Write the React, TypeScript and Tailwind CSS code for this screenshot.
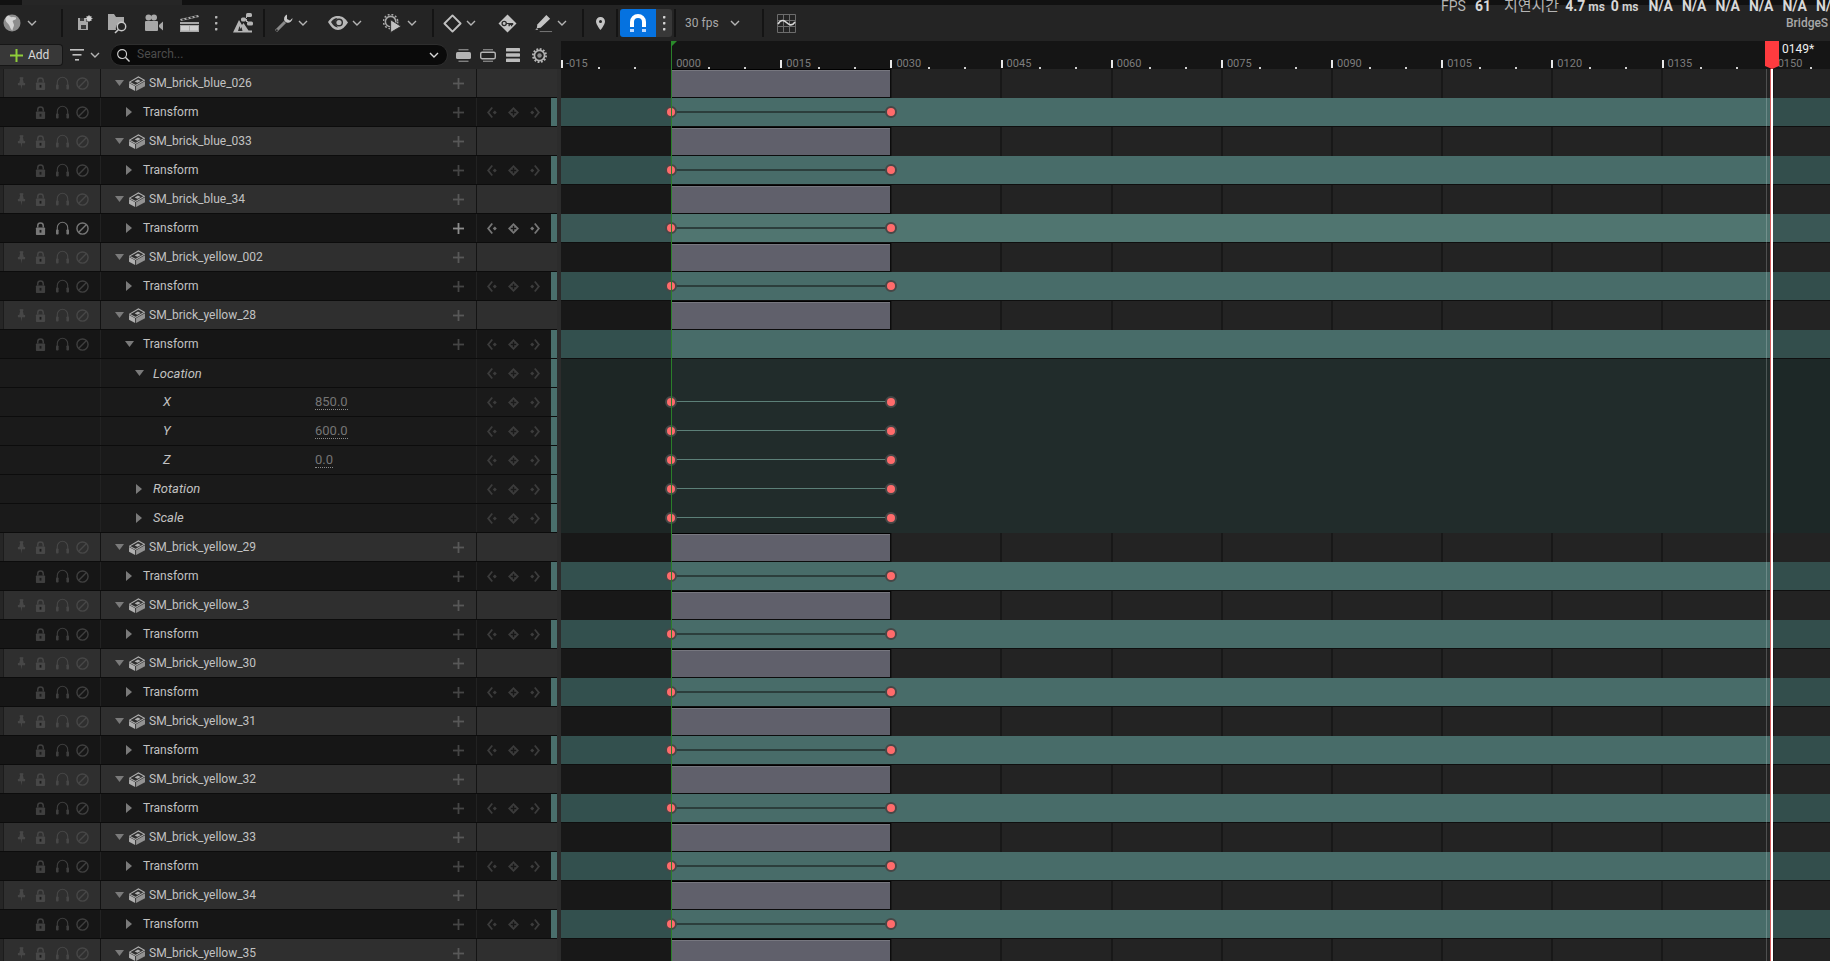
import React from "react";

const font = { fontFamily: '"Roboto", "Noto Sans CJK KR", sans-serif' };

function Chevron({ className = "" }: { className?: string }) {
  return (
    <svg viewBox="0 0 10 6" className={`w-[10px] h-[6px] shrink-0 ${className}`} fill="none" stroke="currentColor" strokeWidth="1.4">
      <path d="M1 1l4 4 4-4" />
    </svg>
  );
}
function Sep() {
  return <div className="w-[2px] h-[28px] bg-[#141414] shrink-0" />;
}
function Globe() {
  return (
    <svg viewBox="0 0 18 18" className="w-[18px] h-[18px]">
      <circle cx="9" cy="9" r="8.5" fill="#8d8d8d" />
      <path d="M5 1.5c2 1 3 2 5 1.5l3 .5c.5 2-1 2.5-3 3-1 1 1 3 1 4.500 0 2-1.500 3-1.500 5.500-2-1-2.500-4-3.500-5.500S3 8 2.500 6 3.500 2.500 5 1.500z" fill="#d2d2d2" />
    </svg>
  );
}
function SaveIc() {
  return (
    <svg viewBox="0 0 16 16" className="w-[16px] h-[16px]" fill="#a8a8a8">
      <path d="M1 3h8v3.500h2V15H1z" />
      <rect x="4" y="10" width="5" height="4" fill="#3b3b3b" />
      <rect x="3" y="3" width="4" height="3" fill="#3b3b3b" />
      <circle cx="12" cy="3.500" r="2.600" fill="#d0d0d0" />
      <path d="M12 0v7M8.500 3.500h7M9.500 1l5 5M14.500 1l-5 5" stroke="#d0d0d0" strokeWidth=".8" />
    </svg>
  );
}
function FolderSearch() {
  return (
    <svg viewBox="0 0 21 21" className="w-[21px] h-[21px]">
      <path d="M0 1h6l2 3h8v6a6 6 0 00-8 7H0z" fill="#a8a8a8" />
      <circle cx="13.500" cy="13.500" r="4.200" fill="none" stroke="#c8c8c8" strokeWidth="1.400" />
      <path d="M10.500 16.500L7 20" stroke="#c8c8c8" strokeWidth="1.600" />
    </svg>
  );
}
function Camera() {
  return (
    <svg viewBox="0 0 20 18" className="w-[20px] h-[18px]" fill="#a8a8a8">
      <circle cx="4.500" cy="3.500" r="3" />
      <circle cx="10" cy="3.500" r="3" />
      <rect x="1" y="7" width="13" height="10" rx="1" />
      <path d="M15 11l4-3.500v9L15 13z" />
    </svg>
  );
}
function Clapper() {
  return (
    <svg viewBox="0 0 20 19" className="w-[20px] h-[19px]" fill="#a8a8a8">
      <path d="M0 5l18-4 1 2-18 4z" />
      <path d="M2 5l1 1.500 2-.5-1-1.500zM6 4l1 1.500 2-.5L8 3zM10 3l1 1.500 2-.5-1-1.500zM14 2.200l1 1.500 2-.5-1-1.500z" fill="#2c2c2c" />
      <rect x="0" y="8" width="19" height="10" />
      <rect x="1" y="12" width="8" height="4.500" fill="#d0d0d0" />
      <rect x="10" y="12" width="8" height="4.500" fill="#d0d0d0" />
      <rect x="0" y="10" width="19" height="1" fill="#2c2c2c" />
    </svg>
  );
}
function Dots({ className = "" }: { className?: string }) {
  return (
    <svg viewBox="0 0 4 16" className={`w-[4px] h-[16px] ${className}`} fill="currentColor">
      <rect x="1" y="1" width="2.400" height="2.400" rx=".6" />
      <rect x="1" y="7" width="2.400" height="2.400" rx=".6" />
      <rect x="1" y="13" width="2.400" height="2.400" rx=".6" />
    </svg>
  );
}
function TreeIc() {
  return (
    <svg viewBox="0 0 20 20" className="w-[20px] h-[20px]" fill="#b4b4b4">
      <path d="M0 19.500L6 7l3 5 1.500-2 5 7.500H19v2z" />
      <path d="M5 18l1.500-5 1 3 1-2 1 4z" fill="#2c2c2c" />
      <rect x="13" y="0" width="6" height="4" rx="1.500" />
      <rect x="8" y="4.500" width="5" height="4" rx="1.500" />
      <rect x="14" y="8.500" width="6" height="4" rx="1.500" />
      <path d="M13 2h1v3h-1zM13 6v3h2v-1h-1V6z" />
    </svg>
  );
}
function Wrench() {
  return (
    <svg viewBox="0 0 20 20" className="w-[20px] h-[20px]" fill="none">
      <path d="M2 18l9-9" stroke="#8a8a8a" strokeWidth="3" />
      <circle cx="2.800" cy="17.200" r="1" fill="#2c2c2c" />
      <path d="M13 1.500a4.500 4.500 0 00-2 7l1.500 1a4.500 4.500 0 006-4.500l-2.500 2.500-3-1.500V3z" fill="#c8c8c8" />
    </svg>
  );
}
function Eye() {
  return (
    <svg viewBox="0 0 20 14" className="w-[20px] h-[14px]">
      <path d="M0 6c3-4.500 6-6 10-6s7 2 10 6.500C17 11 14 14 10 14S3 11 0 6z" fill="#b8b8b8" />
      <path d="M3 6c2-2.500 4-4 6.500-4C8 3.500 7.500 4.500 7.500 6.500S8.500 10 10 11.500C7 11.500 5 9 3 6z" fill="#2c2c2c" />
      <circle cx="11" cy="6.500" r="4" fill="#2c2c2c" />
      <circle cx="11" cy="6.500" r="2.600" fill="#b8b8b8" />
    </svg>
  );
}
function GearPlay() {
  return (
    <svg viewBox="0 0 20 20" className="w-[19px] h-[19px]" fill="none">
      <circle cx="8" cy="8" r="5.500" stroke="#a8a8a8" strokeWidth="1.600" />
      <circle cx="8" cy="8" r="7.500" stroke="#a8a8a8" strokeWidth="1.600" strokeDasharray="2 2" />
      <path d="M8 6l11 7-11 6.500z" fill="#c0c0c0" stroke="#2c2c2c" strokeWidth="1" />
    </svg>
  );
}
function DiamondOutline() {
  return (
    <svg viewBox="0 0 20 20" className="w-[19px] h-[19px]" fill="none" stroke="#c0c0c0" strokeWidth="2">
      <path d="M10 1.500l8.500 8.500-8.500 8.500L1.500 10z" strokeLinejoin="round" />
    </svg>
  );
}
function DiamondKey() {
  return (
    <svg viewBox="0 0 20 20" className="w-[19px] h-[19px]">
      <path d="M10 .5l9.500 9.500-9.500 9.500L.5 10z" fill="#c4c4c4" strokeLinejoin="round" />
      <circle cx="6.500" cy="10" r="2.200" fill="none" stroke="#2c2c2c" strokeWidth="1.400" />
      <path d="M8.500 9.500H16v2h-1v1.500h-1.500v-1.500h-1V13H11v-2.500H8.500z" fill="#2c2c2c" />
    </svg>
  );
}
function Pencil() {
  return (
    <svg viewBox="0 0 20 20" className="w-[19px] h-[19px]">
      <path d="M13 1l4 4L7 14.500l-4 .5.500-4z" fill="#c4c4c4" />
      <path d="M1 17l2-2 1.500 1.500H1z" fill="#c4c4c4" />
      <rect x="6" y="18" width="13" height="1" fill="#7a7a7a" />
    </svg>
  );
}
function MapPin() {
  return (
    <svg viewBox="0 0 9 13" className="w-[9px] h-[13px]">
      <path fillRule="evenodd" d="M4.500 0A4.400 4.400 0 000 4.400C0 7.500 4.500 13 4.500 13S9 7.500 9 4.400A4.400 4.400 0 004.500 0zm0 3a1.500 1.500 0 110 3 1.500 1.500 0 010-3z" fill="#c4c4c4" />
    </svg>
  );
}
function Magnet() {
  return (
    <svg viewBox="0 0 16 18" className="w-[16px] h-[18px]">
      <path d="M0 13V8a8 8 0 0116 0v5h-4V8a4 4 0 00-8 0v5z" fill="#fff" />
      <rect x="0" y="15" width="4" height="3" fill="#bcd9ff" />
      <rect x="12" y="15" width="4" height="3" fill="#bcd9ff" />
    </svg>
  );
}
function GraphIc() {
  return (
    <svg viewBox="0 0 19 19" className="w-[19px] h-[19px]" fill="none">
      <path d="M.5.5h18v18H.5zM6.500.5v18M12.500.5v18M.5 6.500h18M.5 12.500h18" stroke="#6c6c6c" strokeWidth="1" />
      <path d="M1 10c3-5 6-4 8.500-1.500S15 12.500 18 8" stroke="#d8d8d8" strokeWidth="1.600" />
    </svg>
  );
}
function Filter() {
  return (
    <svg viewBox="0 0 14 12" className="w-[14px] h-[12px]" fill="#c0c0c0">
      <rect x="0" y="0" width="14" height="1.600" />
      <rect x="2.500" y="5" width="9" height="1.600" />
      <rect x="5" y="10" width="4" height="1.600" />
    </svg>
  );
}
function Search() {
  return (
    <svg viewBox="0 0 14 14" className="w-[13px] h-[13px]" fill="none" stroke="#d0d0d0" strokeWidth="1.200">
      <circle cx="5.500" cy="5.500" r="4.800" />
      <path d="M9 9l4.500 4.500" strokeWidth="1.500" />
    </svg>
  );
}
function RowSizeA() {
  return (
    <svg viewBox="0 0 15 13" className="w-[15px] h-[13px]" fill="#b4b4b4">
      <rect x="2.500" y="0" width="10" height="1.400" fill="#808080" />
      <rect x="0" y="3" width="15" height="7" rx="1.500" />
      <rect x="2.500" y="11.600" width="10" height="1.400" fill="#808080" />
    </svg>
  );
}
function RowSizeB() {
  return (
    <svg viewBox="0 0 16 13" className="w-[16px] h-[13px]">
      <rect x="3" y="0" width="10" height="1.400" fill="#808080" />
      <rect x=".7" y="3.200" width="14.600" height="6.600" rx="1.500" fill="none" stroke="#b4b4b4" strokeWidth="1.400" />
      <rect x="3" y="11.600" width="10" height="1.400" fill="#808080" />
    </svg>
  );
}
function RowSizeC() {
  return (
    <svg viewBox="0 0 14 14" className="w-[14px] h-[14px]" fill="#bcbcbc">
      <rect x="0" y="0" width="14" height="3.500" rx=".6" />
      <rect x="0" y="5.200" width="14" height="3.500" rx=".6" />
      <rect x="0" y="10.500" width="14" height="3.500" rx=".6" />
    </svg>
  );
}
function Gear() {
  return (
    <svg viewBox="0 0 16 16" className="w-[15px] h-[15px]" fill="none">
      <circle cx="8" cy="8" r="5.400" stroke="#b4b4b4" strokeWidth="1.800" />
      <circle cx="8" cy="8" r="7" stroke="#b4b4b4" strokeWidth="2" strokeDasharray="2 1.670" />
      <circle cx="8" cy="8" r="2.400" fill="#8c8c8c" />
    </svg>
  );
}
function PinIc({ c }: { c: string }) {
  return (
    <svg viewBox="0 0 10 14" className="w-[9px] h-[13px]" fill={c}>
      <rect x="3" y="0" width="4" height="2" />
      <path d="M3.500 2h3l1 4.500H9V9H1V6.500h1.500zM4.300 9h1.400L5 14z" />
    </svg>
  );
}
function LockIc({ c }: { c: string }) {
  return (
    <svg viewBox="0 0 12 14" className="w-[11px] h-[13px]">
      <path d="M3 6V4a3 3 0 016 0v2" fill="none" stroke={c} strokeWidth="1.600" />
      <rect x="1" y="6" width="10" height="8" rx=".8" fill={c} />
      <rect x="5" y="8.500" width="2" height="3" fill="#1c1c1c" />
    </svg>
  );
}
function PhonesIc({ c }: { c: string }) {
  return (
    <svg viewBox="0 0 13 14" className="w-[13px] h-[14px]">
      <path d="M1.300 10V6.500a5.200 5.200 0 0110.400 0V10" fill="none" stroke={c} strokeWidth="1.100" />
      <rect x="0" y="8.500" width="2.600" height="5" rx=".8" fill={c} />
      <rect x="10.400" y="8.500" width="2.600" height="5" rx=".8" fill={c} />
    </svg>
  );
}
function NoIc({ c }: { c: string }) {
  return (
    <svg viewBox="0 0 14 14" className="w-[13px] h-[13px]" fill="none" stroke={c} strokeWidth="1.500">
      <circle cx="7" cy="7" r="6" />
      <path d="M3 11L11 3" />
    </svg>
  );
}
function Brick({ c = "#b0b0b0" }: { c?: string }) {
  return (
    <svg viewBox="0 0 17 16" className="w-[16px] h-[15px]">
      <path d="M.5 6.500L10 1l6.500 3.500L7 10z" fill="none" stroke={c} strokeWidth="1.100" />
      <path d="M6 5.800l3.500-2 3 1.500-3.500 2z" fill={c} />
      <path d="M0 7.500l6.500 3.300V16L0 12.500z" fill={c} />
      <path d="M7.500 10.800L17 5.700v5.300L7.500 16z" fill="#929292" />
    </svg>
  );
}
function Plus({ c }: { c: string }) {
  return (
    <svg viewBox="0 0 11 11" className="w-[11px] h-[11px]" fill={c}>
      <rect x="4.600" y="0" width="1.800" height="11" />
      <rect x="0" y="4.600" width="11" height="1.800" />
    </svg>
  );
}
function KeyNav({ c }: { c: string }) {
  return (
    <div className="flex items-center w-[53px] justify-between ml-[10px]">
      <svg viewBox="0 0 12 12" className="w-[11px] h-[11px]" fill={c}>
        <path d="M5 0L0 6l5 6 1.500-1.200L2.500 6l4-4.800z" />
        <path d="M8.500 3.800L10.700 6 8.500 8.200 6.300 6z" />
      </svg>
      <svg viewBox="0 0 12 12" className="w-[11px] h-[11px]" fill={c}>
        <path fillRule="evenodd" d="M6 0l6 6-6 6-6-6zM5.200 3v2.200H3v1.600h2.200V9h1.600V6.800H9V5.200H6.800V3z" />
      </svg>
      <svg viewBox="0 0 12 12" className="w-[11px] h-[11px]" fill={c}>
        <path d="M7 0l5 6-5 6-1.500-1.200L9.500 6l-4-4.800z" />
        <path d="M3.500 3.800L5.700 6 3.500 8.200 1.300 6z" />
      </svg>
    </div>
  );
}
function TriDown({ c = "#7a7a7a" }: { c?: string }) {
  return (
    <svg viewBox="0 0 9 6" className="w-[9px] h-[6px]" fill={c}>
      <path d="M0 0h9L4.500 6z" />
    </svg>
  );
}
function TriRight({ c = "#7a7a7a" }: { c?: string }) {
  return (
    <svg viewBox="0 0 6 10" className="w-[6px] h-[10px]" fill={c}>
      <path d="M0 0l6 5-6 5z" />
    </svg>
  );
}

type Kind = "main" | "transform" | "transformOpen" | "location" | "axis" | "sub";
type Row = { kind: Kind; label: string; value?: string; active?: boolean; open?: boolean };

const names = [
  "blue_026", "blue_033", "blue_34", "yellow_002", "yellow_28", "yellow_29", "yellow_3",
  "yellow_30", "yellow_31", "yellow_32", "yellow_33", "yellow_34", "yellow_35",
];
const rows: Row[] = [];
names.forEach((n) => {
  rows.push({ kind: "main", label: "SM_brick_" + n });
  if (n === "yellow_35") return;
  if (n === "yellow_28") {
    rows.push({ kind: "transformOpen", label: "Transform" });
    rows.push({ kind: "location", label: "Location" });
    rows.push({ kind: "axis", label: "X", value: "850.0" });
    rows.push({ kind: "axis", label: "Y", value: "600.0" });
    rows.push({ kind: "axis", label: "Z", value: "0.0" });
    rows.push({ kind: "sub", label: "Rotation" });
    rows.push({ kind: "sub", label: "Scale" });
  } else {
    rows.push({ kind: "transform", label: "Transform", active: n === "blue_34" });
  }
});

function LeftRow({ r }: { r: Row }) {
  if (r.kind === "main") {
    return (
      <div className="h-[29px] shrink-0 flex bg-[#2f2f2f] border-b border-[#0c0c0c] text-[12px] text-[#c2c2c2]">
        <div className="w-[4px] bg-[#262626] border-r border-[#1c1c1c]" />
        <div className="w-[97px] flex items-center border-r border-[#141414]">
          <div className="w-[9px] ml-[13px] flex"><PinIc c="#474747" /></div>
          <div className="ml-[9px] flex"><LockIc c="#474747" /></div>
          <div className="ml-[10px] flex"><PhonesIc c="#474747" /></div>
          <div className="ml-[7px] flex"><NoIc c="#474747" /></div>
        </div>
        <div className="w-[376px] flex items-center border-r border-[#141414]">
          <div className="ml-[14px] flex"><TriDown /></div>
          <div className="ml-[5px] flex"><Brick /></div>
          <span className="ml-[4px] flex-1">{r.label}</span>
          <div className="mr-[12px] flex"><Plus c="#585858" /></div>
        </div>
        <div className="flex-1" />
      </div>
    );
  }
  const t = r.kind === "transform" || r.kind === "transformOpen";
  const ic = r.active ? "#777777" : "#3f3f3f";
  const nav = r.active ? "#777777" : "#3c3c3c";
  return (
    <div className={`h-[29px] shrink-0 flex border-b border-[#0c0c0c] text-[12px] text-[#c2c2c2] ${t ? "bg-[#161616]" : "bg-[#1a1a1a]"}`}>
      <div className="w-[101px] flex items-center border-r border-[#222]">
        {t && (
          <>
            <div className="ml-[35px] flex"><LockIc c={ic} /></div>
            <div className="ml-[10px] flex"><PhonesIc c={ic} /></div>
            <div className="ml-[7px] flex"><NoIc c={ic} /></div>
          </>
        )}
      </div>
      <div className="w-[376px] flex items-center border-r border-[#222]">
        {r.kind === "transform" && <div className="ml-[25px] w-[17px] flex"><TriRight /></div>}
        {r.kind === "transformOpen" && <div className="ml-[24px] w-[18px] flex"><TriDown /></div>}
        {t && <span className="flex-1">{r.label}</span>}
        {t && <div className="mr-[12px] flex"><Plus c={r.active ? "#8c8c8c" : "#454545"} /></div>}
        {r.kind === "location" && (
          <>
            <div className="ml-[34px] w-[18px] flex"><TriDown /></div>
            <span className="italic text-[13px] mt-[1px]">{r.label}</span>
          </>
        )}
        {r.kind === "sub" && (
          <>
            <div className="ml-[35px] w-[17px] flex"><TriRight /></div>
            <span className="italic text-[13px]">{r.label}</span>
          </>
        )}
        {r.kind === "axis" && (
          <>
            <span className="ml-[62px] w-[152px] italic text-[13px]">{r.label}</span>
            <span className="text-[#757575] text-[13px] mt-[1px] border-b border-dotted border-[#8a8a8a] leading-[14px]">{r.value}</span>
          </>
        )}
      </div>
      <div className="flex-1 flex items-center justify-between">
        <KeyNav c={nav} />
        <div className="w-[6px] h-full bg-[#4a6f6c]" />
      </div>
    </div>
  );
}

const FRAME0 = 109;
const MAJOR = 110.15;

function Track({ r }: { r: Row }) {
  const gridlines = [0, 1, 2, 3, 4, 5, 6, 7, 8, 9, 10];
  if (r.kind === "main") {
    return (
      <div className="h-[29px] shrink-0 relative bg-[#232323] flex">
        <div className="w-[110px] bg-[#181818] h-full" />
        {gridlines.map((g) => (
          <div key={g} className="absolute top-0 bottom-0 w-[2px] bg-[#181818]" style={{ left: FRAME0 + MAJOR * g }} />
        ))}
        <div className="absolute left-[111px] top-0 w-[219px] h-[29px] bg-[#60606b] border-y border-r border-[#0c0c0c] border-t-[#000]">
          <div className="h-px bg-[#77777f]" />
        </div>
      </div>
    );
  }
  if (r.kind === "location") {
    return <div className="h-[29px] shrink-0 bg-[#212c2b] flex"><div className="w-[110px] bg-[#1d2625]" /><div className="ml-auto w-[59px] bg-[#1d2827]" /></div>;
  }
  if (r.kind === "axis" || r.kind === "sub") {
    return (
      <div className="h-[29px] shrink-0 bg-[#212c2b] relative flex">
        <div className="w-[110px] bg-[#1d2625]" />
        <div className="ml-auto w-[59px] bg-[#1d2827]" />
        <div className="absolute left-[110px] w-[220px] top-[13px] h-px bg-[#5c8078]" />
        <Key x={110} />
        <Key x={330} />
      </div>
    );
  }
  const open = r.kind === "transformOpen";
  return (
    <div className="h-[29px] shrink-0 relative flex bg-[#0f0f0f]">
      <div className={`w-[110px] h-[28px] ${r.active ? "bg-[#3a5755]" : "bg-[#33504e]"}`} />
      <div className={`flex-1 h-[28px] ${r.active ? "bg-[#507570]" : "bg-[#486c69]"}`} />
      <div className={`w-[59px] h-[28px] ${r.active ? "bg-[#3a5755]" : "bg-[#334e4c]"}`} />
      {!open && (
        <>
          <div className="absolute left-[110px] w-[220px] top-[13px] h-[2px] bg-[#2c3e3c]" />
          <Key x={110} />
          <Key x={330} />
        </>
      )}
    </div>
  );
}
function Key({ x }: { x: number }) {
  return (
    <div
      className="absolute top-[8px] w-[12px] h-[12px] -ml-[6px] rounded-full bg-[#ff6b6b] border-2 border-[#474747]"
      style={{ left: x }}
    />
  );
}

const labels = ["-015", "0000", "0015", "0030", "0045", "0060", "0075", "0090", "0105", "0120", "0135", "0150"];

export default function App() {
  return (
    <div className="w-[1830px] h-[961px] overflow-hidden flex flex-col bg-[#242424] relative" style={font}>
      <div className="h-[5px] bg-[#111] shrink-0 flex">
        <div className="ml-[22px] w-[160px] bg-[#262626]" />
      </div>
      <div className="h-[36px] shrink-0 flex items-center bg-[#242424] text-[#b4b4b4]">
        <div className="ml-[3px] flex"><Globe /></div>
        <Chevron className="ml-[6px]" />
        <div className="ml-[24px]"><Sep /></div>
        <div className="ml-[14px] flex"><SaveIc /></div>
        <div className="ml-[15px] flex"><FolderSearch /></div>
        <div className="ml-[15px] flex"><Camera /></div>
        <div className="ml-[16px] flex"><Clapper /></div>
        <Dots className="ml-[14px]" />
        <div className="ml-[15px] flex"><TreeIc /></div>
        <div className="ml-[10px]"><Sep /></div>
        <div className="ml-[9px] flex"><Wrench /></div>
        <Chevron className="ml-[4px]" />
        <div className="ml-[20px] flex"><Eye /></div>
        <Chevron className="ml-[4px]" />
        <div className="ml-[21px] flex"><GearPlay /></div>
        <Chevron className="ml-[5px]" />
        <div className="ml-[15px]"><Sep /></div>
        <div className="ml-[9px] flex"><DiamondOutline /></div>
        <Chevron className="ml-[4px]" />
        <div className="ml-[22px] flex"><DiamondKey /></div>
        <div className="ml-[17px] flex"><Pencil /></div>
        <Chevron className="ml-[4px]" />
        <div className="ml-[15px]"><Sep /></div>
        <div className="ml-[12px] flex"><MapPin /></div>
        <div className="ml-[11px]"><Sep /></div>
        <div className="ml-[2px] h-[28px] w-[36px] rounded-l-[3px] bg-[#0572e0] flex items-center justify-center"><Magnet /></div>
        <div className="h-[28px] w-[16px] rounded-r-[3px] bg-[#383838] flex items-center justify-center text-[#d4d4d4]"><Dots /></div>
        <div className="ml-[2px]"><Sep /></div>
        <span className="ml-[9px] text-[12px] text-[#a8a8a8]">30 fps</span>
        <Chevron className="ml-[11px]" />
        <div className="ml-[22px]"><Sep /></div>
        <div className="ml-[13px] flex"><GraphIc /></div>
      </div>

      <div className="flex-1 flex min-h-0">
        <div className="w-[561px] shrink-0 flex flex-col overflow-hidden">
          <div className="h-[28px] shrink-0 flex items-center bg-[#242424]">
            <div className="w-[63px] h-[22px] rounded-r-[4px] bg-[#383838] border border-l-0 border-[#161616] flex items-center">
              <svg viewBox="0 0 13 13" className="w-[13px] h-[13px] ml-[10px]" fill="#8fce3a">
                <rect x="5.500" y="0" width="2" height="13" />
                <rect x="0" y="5.500" width="13" height="2" />
              </svg>
              <span className="ml-[5px] text-[12px] text-[#d8d8d8]">Add</span>
            </div>
            <div className="ml-[7px] flex"><Filter /></div>
            <Chevron className="ml-[6px] text-[#b4b4b4]" />
            <div className="ml-[10px] w-[338px] h-[22px] rounded-full bg-[#0a0a0a] border border-[#2e2e2e] flex items-center">
              <div className="ml-[6px] flex"><Search /></div>
              <span className="ml-[7px] flex-1 text-[12px] leading-[14px] mb-[2px] text-[#4c4c4c]">Search...</span>
              <Chevron className="mr-[8px] text-[#d8d8d8]" />
            </div>
            <div className="ml-[8px] flex"><RowSizeA /></div>
            <div className="ml-[9px] flex"><RowSizeB /></div>
            <div className="ml-[10px] flex"><RowSizeC /></div>
            <div className="ml-[12px] flex"><Gear /></div>
          </div>
          <div className="flex-1 flex min-h-0">
            <div className="w-[557px] flex flex-col">
              {rows.map((r, i) => <LeftRow key={i} r={r} />)}
            </div>
            <div className="flex-1 bg-[#2c2c2c]" />
          </div>
        </div>

        <div className="flex-1 flex flex-col relative overflow-hidden">
          <div className="h-[28px] shrink-0 bg-[#151515] relative">
            {labels.map((l, i) => (
              <React.Fragment key={l}>
                {i !== 1 && (
                  <div className="absolute top-[19px] h-[8px] w-[2px] bg-[#e8e8e8]" style={{ left: MAJOR * i - (i === 0 ? 0 : 1) }} />
                )}
                <span className="absolute top-[16px] text-[11px] leading-[14px] text-[#7d7d7d]" style={{ left: MAJOR * i + 5 }}>{l}</span>
                <div className="absolute top-[26px] h-[2px] w-[2px] bg-[#d0d0d0]" style={{ left: MAJOR * i + 37 }} />
                <div className="absolute top-[26px] h-[2px] w-[2px] bg-[#d0d0d0]" style={{ left: MAJOR * i + 73 }} />
              </React.Fragment>
            ))}
          </div>
          <div className="flex-1 flex flex-col min-h-0">
            {rows.map((r, i) => <Track key={i} r={r} />)}
          </div>

          <div className="absolute left-[110px] top-0 bottom-0 w-px bg-[#2a7f2a]" />
          <svg viewBox="0 0 6 6" className="absolute left-[110px] top-0 w-[6px] h-[6px]" fill="#2a8a2a">
            <path d="M0 0h6L0 6z" />
          </svg>
          <div className="absolute left-[1205px] top-[28px] bottom-0 w-px bg-[#ffffff33]" />
          <div className="absolute left-[1209px] top-[28px] bottom-0 w-[3px] bg-[#fff] border-l border-[#d65a5a]" />
          <svg viewBox="0 0 14 28" className="absolute left-[1204px] top-0 w-[14px] h-[28px]" fill="#ff3b3f">
            <path d="M0 0h14v25l-7 3-7-3z" />
          </svg>
          <span className="absolute left-[1221px] top-[0px] text-[12px] leading-[14px] mt-[1px] text-[#f0f0f0]">0149*</span>
        </div>
      </div>

      <div className="absolute left-[1441px] top-0 flex items-baseline whitespace-nowrap text-[14px] leading-[12px] text-[#b4b4b4]">
        <span>FPS</span>
        <span className="ml-[9px] font-bold text-[#d8d8d8]">61</span>
        <span className="ml-[13px] text-[15px]">지연시간</span>
        <span className="ml-[6px] font-bold text-[#d8d8d8]">4.7</span>
        <span className="ml-[3px] text-[12px] font-bold text-[#d0d0d0]">ms</span>
        <span className="ml-[6px] font-bold text-[#d8d8d8]">0</span>
        <span className="ml-[3px] text-[12px] font-bold text-[#d0d0d0]">ms</span>
        <span className="ml-[10px] font-bold text-[#d8d8d8]">N/A</span>
        {[1, 2, 3, 4, 5].map((i) => (
          <span key={i} className="ml-[9px] font-bold text-[#d8d8d8]">N/A</span>
        ))}
      </div>
      <div className="absolute left-[1786px] top-[16px] text-[12px] leading-[14px] font-medium text-[#a8a8a8]">BridgeS</div>
    </div>
  );
}
